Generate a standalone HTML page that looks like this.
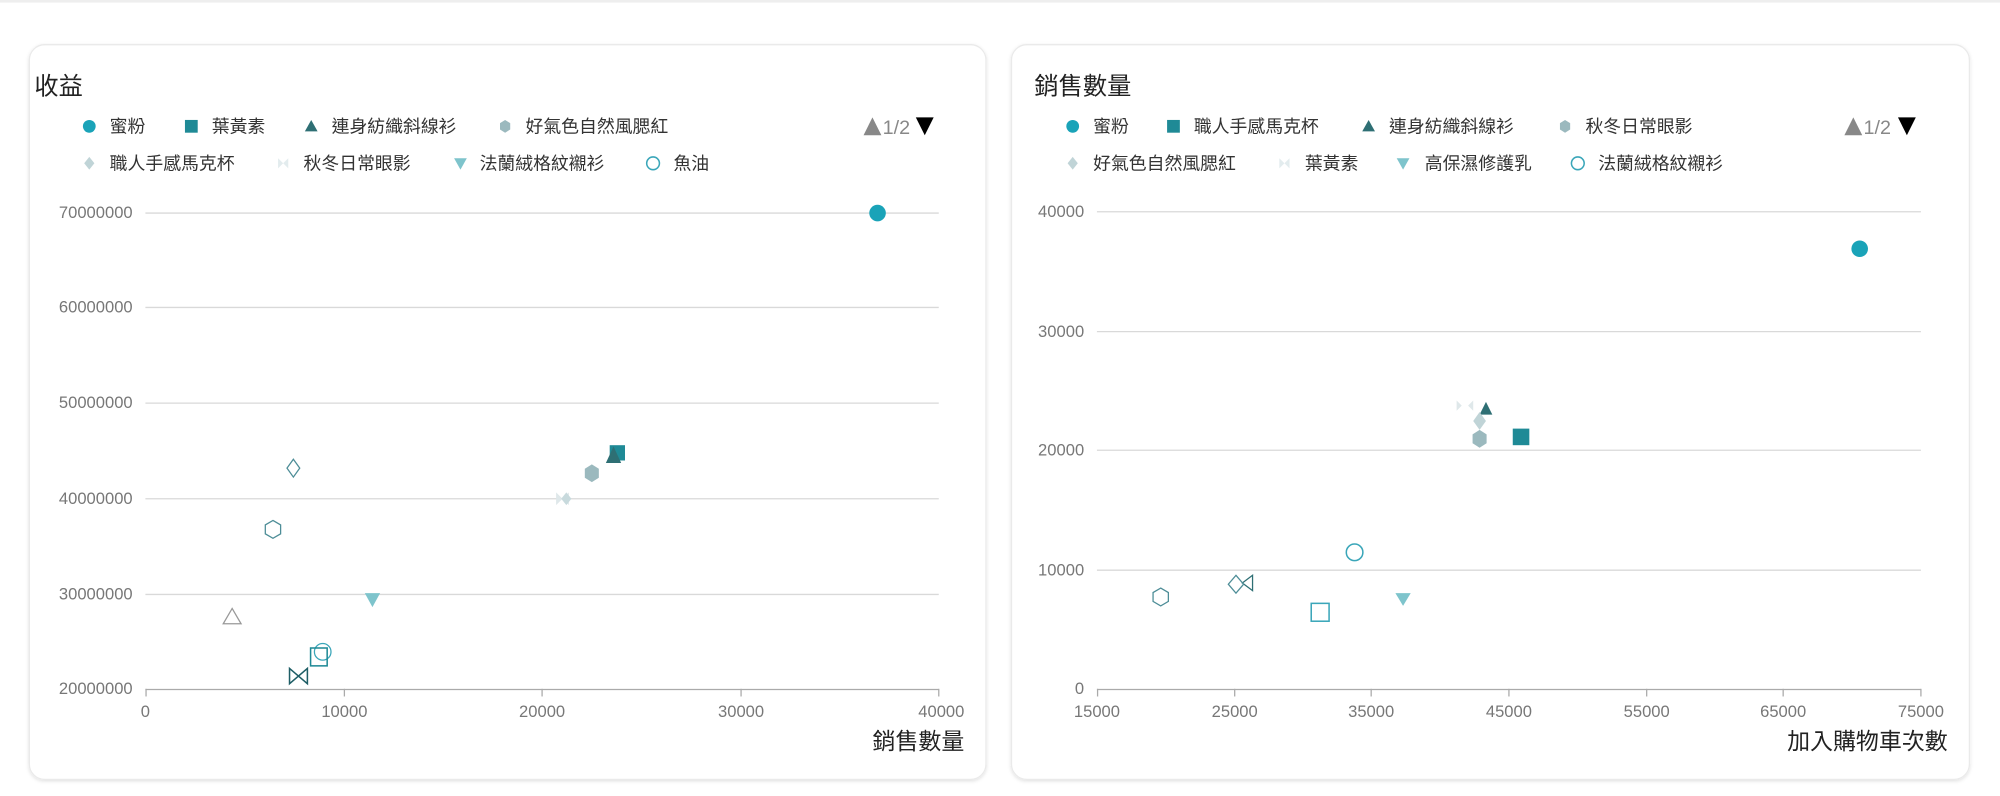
<!DOCTYPE html>
<html><head><meta charset="utf-8"><style>
html,body{margin:0;padding:0;background:#fff;width:2000px;height:796px;overflow:hidden}
svg{display:block}
text{font-family:"Liberation Sans","Noto Sans CJK TC",sans-serif}
.t{fill:#333;font-size:14px}
.ax{fill:#777;font-size:13px}
.g{stroke:#d9d9d9;stroke-width:1}
</style></head><body>
<svg width="2000" height="796" viewBox="0 0 1568 624" xmlns="http://www.w3.org/2000/svg">
<rect x="0" y="0" width="1568" height="2" fill="#eee"/>
<defs><filter id="sh" x="-5%" y="-5%" width="110%" height="110%"><feDropShadow dx="0" dy="1" stdDeviation="1.5" flood-color="#000" flood-opacity="0.12"/></filter></defs>
<rect x="23" y="35" width="750" height="576" rx="12" fill="#fff" stroke="#eaeaea" filter="url(#sh)"/>
<rect x="793" y="35" width="751" height="576" rx="12" fill="#fff" stroke="#eaeaea" filter="url(#sh)"/>

<!-- Card 1 -->
<text x="27" y="74" font-size="19" fill="#222">收益</text>
<circle cx="70" cy="99" r="5" fill="#1aa3b8"/><text class="t" x="86" y="104">蜜粉</text>
<rect x="145" y="94" width="10" height="10" fill="#1f8a96"/><text class="t" x="166" y="104">葉黃素</text>
<path d="M244 94 L249 103 L239 103Z" fill="#2e6f74"/><text class="t" x="260" y="104">連身紡織斜線衫</text>
<path d="M396 94 L400 96.5 L400 101.5 L396 104 L392 101.5 L392 96.5Z" fill="#9bb9be"/><text class="t" x="412" y="104">好氣色自然風腮紅</text>
<path d="M677 106 L684 92 L691 106Z" fill="#888"/><text x="692" y="105" font-size="15.5" fill="#888">1/2</text><path d="M718 92 L732 92 L725 106Z" fill="#000"/>
<path d="M70 123 L74 128 L70 133 L66 128Z" fill="#c0d4d7"/><text class="t" x="86" y="133">職人手感馬克杯</text>
<path d="M218 124 L222 128 L218 132Z M226 124 L222 128 L226 132Z" fill="#e3ecee"/><text class="t" x="238" y="133">秋冬日常眼影</text>
<path d="M356 124 L366 124 L361 133Z" fill="#7ec4cc"/><text class="t" x="376" y="133">法蘭絨格紋襯衫</text>
<circle cx="512" cy="128" r="5" fill="none" stroke="#3aa6b9" stroke-width="1.2"/><text class="t" x="528" y="133">魚油</text>

<g class="g">
<line x1="114" y1="167" x2="736" y2="167"/><line x1="114" y1="241" x2="736" y2="241"/>
<line x1="114" y1="316" x2="736" y2="316"/><line x1="114" y1="391" x2="736" y2="391"/>
<line x1="114" y1="466" x2="736" y2="466"/>
</g>
<line x1="114" y1="540.5" x2="736" y2="540.5" stroke="#aaa"/>
<g stroke="#aaa"><line x1="114.5" y1="540" x2="114.5" y2="546"/><line x1="270" y1="540" x2="270" y2="546"/><line x1="425" y1="540" x2="425" y2="546"/><line x1="581" y1="540" x2="581" y2="546"/><line x1="736" y1="540" x2="736" y2="546"/></g>
<g class="ax" text-anchor="end">
<text x="104" y="171">70000000</text><text x="104" y="245">60000000</text><text x="104" y="320">50000000</text>
<text x="104" y="395">40000000</text><text x="104" y="470">30000000</text><text x="104" y="544">20000000</text>
</g>
<g class="ax" text-anchor="middle">
<text x="114" y="562">0</text><text x="270" y="562">10000</text><text x="425" y="562">20000</text><text x="581" y="562">30000</text><text x="738" y="562">40000</text>
</g>
<text x="756" y="587" font-size="18" fill="#222" text-anchor="end">銷售數量</text>

<circle cx="688" cy="167" r="6.5" fill="#1aa3b8"/>
<rect x="478" y="349" width="12" height="12" fill="#1f8a96"/>
<path d="M481 350 L487 363 L475 363Z" fill="#2e6f74"/>
<path d="M464 364 L469.5 367.5 L469.5 374.5 L464 378 L458.5 374.5 L458.5 367.5Z" fill="#9bb9be"/>
<path d="M436 386 L441 391 L436 396Z M446 386 L441 391 L446 396Z" fill="#dfe8ea"/>
<path d="M444 386 L448 391 L444 396 L440 391Z" fill="#c8dadd"/>
<path d="M230 360 L235 367 L230 374 L225 367Z" fill="none" stroke="#4d8d97"/>
<path d="M214 408 L220 411.5 L220 418.5 L214 422 L208 418.5 L208 411.5Z" fill="none" stroke="#4d8d97"/>
<path d="M182 477 L189 489 L175 489Z" fill="none" stroke="#999"/>
<path d="M286 465 L298 465 L292 476Z" fill="#7ec4cc"/>
<circle cx="253" cy="511" r="6.5" fill="none" stroke="#3aa6b9"/>
<rect x="243.5" y="508" width="13" height="14" fill="none" stroke="#1f8a96" stroke-width="1.2"/>
<path d="M227 524 L241 536 L241 524 L227 536Z" fill="none" stroke="#1e5e66" stroke-width="1.2"/>

<!-- Card 2 -->
<text x="811" y="74" font-size="19" fill="#222">銷售數量</text>
<circle cx="841" cy="99" r="5" fill="#1aa3b8"/><text class="t" x="857" y="104">蜜粉</text>
<rect x="915" y="94" width="10" height="10" fill="#1f8a96"/><text class="t" x="936" y="104">職人手感馬克杯</text>
<path d="M1073 94 L1078 103 L1068 103Z" fill="#2e6f74"/><text class="t" x="1089" y="104">連身紡織斜線衫</text>
<path d="M1227 94 L1231 96.5 L1231 101.5 L1227 104 L1223 101.5 L1223 96.5Z" fill="#9bb9be"/><text class="t" x="1243" y="104">秋冬日常眼影</text>
<path d="M1446 106 L1453 92 L1460 106Z" fill="#888"/><text x="1461" y="105" font-size="15.5" fill="#888">1/2</text><path d="M1488 92 L1502 92 L1495 106Z" fill="#000"/>
<path d="M841 123 L845 128 L841 133 L837 128Z" fill="#c0d4d7"/><text class="t" x="857" y="133">好氣色自然風腮紅</text>
<path d="M1003 124 L1007 128 L1003 132Z M1011 124 L1007 128 L1011 132Z" fill="#e3ecee"/><text class="t" x="1023" y="133">葉黃素</text>
<path d="M1095 124 L1105 124 L1100 133Z" fill="#7ec4cc"/><text class="t" x="1117" y="133">高保濕修護乳</text>
<circle cx="1237" cy="128" r="5" fill="none" stroke="#3aa6b9" stroke-width="1.2"/><text class="t" x="1253" y="133">法蘭絨格紋襯衫</text>

<g class="g">
<line x1="860" y1="166" x2="1506" y2="166"/><line x1="860" y1="260" x2="1506" y2="260"/>
<line x1="860" y1="353" x2="1506" y2="353"/><line x1="860" y1="447" x2="1506" y2="447"/>
</g>
<line x1="860" y1="540.5" x2="1506" y2="540.5" stroke="#aaa"/>
<g stroke="#aaa"><line x1="860.5" y1="540" x2="860.5" y2="546"/><line x1="968" y1="540" x2="968" y2="546"/><line x1="1075" y1="540" x2="1075" y2="546"/><line x1="1183" y1="540" x2="1183" y2="546"/><line x1="1291" y1="540" x2="1291" y2="546"/><line x1="1398" y1="540" x2="1398" y2="546"/><line x1="1506" y1="540" x2="1506" y2="546"/></g>
<g class="ax" text-anchor="end">
<text x="850" y="170">40000</text><text x="850" y="264">30000</text><text x="850" y="357">20000</text><text x="850" y="451">10000</text><text x="850" y="544">0</text>
</g>
<g class="ax" text-anchor="middle">
<text x="860" y="562">15000</text><text x="968" y="562">25000</text><text x="1075" y="562">35000</text><text x="1183" y="562">45000</text><text x="1291" y="562">55000</text><text x="1398" y="562">65000</text><text x="1506" y="562">75000</text>
</g>
<text x="1527" y="587" font-size="18" fill="#222" text-anchor="end">加入購物車次數</text>

<circle cx="1458" cy="195" r="6.5" fill="#1aa3b8"/>
<rect x="1186" y="336" width="13" height="13" fill="#1f8a96"/>
<path d="M1165 315 L1170 325 L1160 325Z" fill="#2e6f74"/>
<path d="M1160 323 L1165 330 L1160 337 L1155 330Z" fill="#c0d4d7"/>
<path d="M1160 337 L1165.5 340.5 L1165.5 347.5 L1160 351 L1154.5 347.5 L1154.5 340.5Z" fill="#9bb9be"/>
<path d="M1142 314 L1146 318 L1142 322Z M1155 314 L1151 318 L1155 322Z" fill="#dfe8ea"/>
<circle cx="1062" cy="433" r="6.5" fill="none" stroke="#3aa6b9" stroke-width="1.2"/>
<path d="M1094 465 L1106 465 L1100 475Z" fill="#7ec4cc"/>
<rect x="1028" y="473" width="14" height="14" fill="none" stroke="#3aa6b9" stroke-width="1.2"/>
<path d="M982 451 L982 463 L974 457Z" fill="none" stroke="#2e6f74"/>
<path d="M969 451 L975 458 L969 465 L963 458Z" fill="none" stroke="#4d8d97"/>
<path d="M910 461 L916 464.5 L916 471.5 L910 475 L904 471.5 L904 464.5Z" fill="none" stroke="#4d8d97"/>
</svg>
</body></html>
